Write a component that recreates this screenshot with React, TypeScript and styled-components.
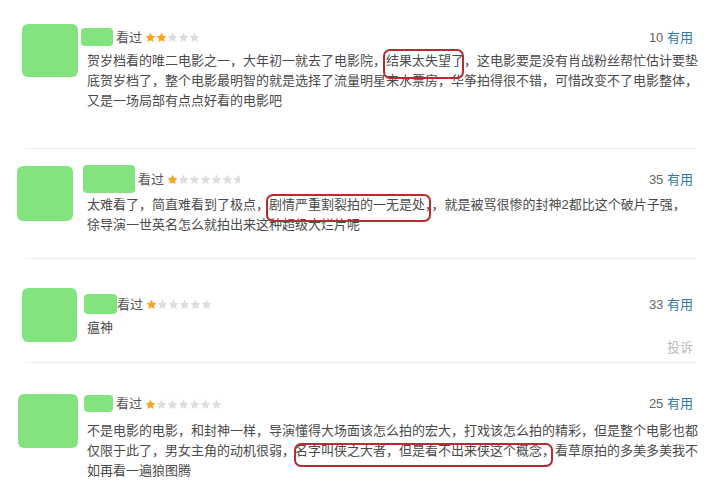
import React from "react";
import styled, { createGlobalStyle } from "styled-components";

const GlobalStyle = createGlobalStyle`
    html, body {
        margin: 0;
        padding: 0;
        background: #fff;
    }
    body {
        font-family: "Liberation Sans", Arial, "Noto Sans CJK SC", sans-serif;
        font-size: 13px;
        color: #4a4a4a;
    }
`;

const Page = styled.div`
    width: 719px;
    height: 485px;
    overflow: hidden;
`;

const Card = styled.div<{ $left: number; $bottom: number }>`
    display: flex;
    align-items: flex-start;
    padding: 0 26px ${({ $bottom }) => $bottom}px ${({ $left }) => $left}px;
`;

const Avatar = styled.div<{ $w: number; $h: number; $top: number; $gap: number }>`
    flex: none;
    width: ${({ $w }) => $w}px;
    height: ${({ $h }) => $h}px;
    margin: ${({ $top }) => $top}px ${({ $gap }) => $gap}px 0 0;
    background: #82e37f;
    border-radius: 6px;
`;

const Body = styled.div<{ $top: number }>`
    flex: 1;
    min-width: 0;
    margin-top: ${({ $top }) => $top}px;
`;

const Header = styled.div<{ $h: number }>`
    display: flex;
    align-items: center;
    height: ${({ $h }) => $h}px;
    white-space: nowrap;
`;

const NameBox = styled.div<{ $w: number; $h: number; $gap: number }>`
    flex: none;
    width: ${({ $w }) => $w}px;
    height: ${({ $h }) => $h}px;
    margin-right: ${({ $gap }) => $gap}px;
    background: #82e37f;
    border-radius: 4px;
`;

const Watched = styled.span`
    color: #555;
    line-height: 1;
    margin-right: 3px;
`;

const StarRow = styled.span<{ $clip: number }>`
    display: inline-flex;
    width: ${({ $clip }) => $clip}px;
    overflow: hidden;
    margin-top: 1px;
`;

const StarIcon = styled.svg`
    flex: none;
    width: 11px;
    height: 11px;
`;

const Votes = styled.span`
    margin-left: auto;
    color: #666;
    line-height: 1;
`;

const Useful = styled.span`
    color: #3377aa;
`;

const Text = styled.div<{ $top: number; $indent: number }>`
    margin-top: ${({ $top }) => $top}px;
    padding-left: ${({ $indent }) => $indent}px;
    line-height: 20px;
    white-space: nowrap;
`;

const Mark = styled.span<{ $t: number; $b: number; $l: number; $r: number }>`
    position: relative;
    &::after {
        content: '';
        position: absolute;
        top: ${({ $t }) => $t}px;
        bottom: ${({ $b }) => $b}px;
        left: ${({ $l }) => $l}px;
        right: ${({ $r }) => $r}px;
        border: 2px solid #bb2a2e;
        border-radius: 7px;
        pointer-events: none;
    }
`;

const Report = styled.div`
    text-align: right;
    line-height: 20px;
    color: #bbb;
`;

const Divider = styled.div`
    height: 1px;
    margin-left: 25px;
    width: 671px;
    background: #eee;
`;

const Star = ({ on }: { on: boolean }) => (
    <StarIcon viewBox="0 0 11 11">
        <path
            d="M5.5 0.6l1.5 3.15 3.45.45-2.5 2.35.65 3.4-3.1-1.65-3.1 1.65.65-3.4L.55 4.2 4 3.75z"
            fill={on ? "#f7a51c" : "#dedede"}
        />
    </StarIcon>
);

interface IComment {
    left: number;
    bottom: number;
    avatar: { w: number; h: number; top: number; gap: number };
    bodyTop: number;
    name: { w: number; h: number; gap: number };
    stars: { on: number; total: number; clip: number };
    votes: number;
    textTop: number;
    indent: number;
    lines: React.ReactNode[];
    report?: boolean;
}

const comments: IComment[] = [
    {
        left: 22, bottom: 37,
        avatar: { w: 56, h: 53, top: 24, gap: 3 },
        bodyTop: 28,
        name: { w: 32, h: 18, gap: 3 },
        stars: { on: 2, total: 5, clip: 55 },
        votes: 10,
        textTop: 5,
        indent: 6,
        lines: [
            <>贺岁档看的唯二电影之一，大年初一就去了电影院，<Mark $t={-4} $b={-11} $l={-3} $r={0}>结果太失望了</Mark>，这电影要是没有肖战粉丝帮忙估计要垫</>,
            "底贺岁档了，整个电影最明智的就是选择了流量明星来水票房，华筝拍得很不错，可惜改变不了电影整体，",
            "又是一场局部有点点好看的电影吧",
        ],
    },
    {
        left: 17, bottom: 23,
        avatar: { w: 56, h: 55, top: 17, gap: 10 },
        bodyTop: 16,
        name: { w: 52, h: 28, gap: 3 },
        stars: { on: 1, total: 7, clip: 73 },
        votes: 35,
        textTop: 2,
        indent: 4,
        lines: [
            <>太难看了，简直难看到了极点，<Mark $t={-3} $b={-10} $l={-3} $r={1}>剧情严重割裂拍的一无是处，</Mark>，就是被骂很惨的封神2都比这个破片子强，</>,
            "徐导演一世英名怎么就拍出来这种超级大烂片呢",
        ],
    },
    {
        left: 22, bottom: 4,
        avatar: { w: 55, h: 54, top: 29, gap: 7 },
        bodyTop: 35,
        name: { w: 33, h: 20, gap: 0 },
        stars: { on: 1, total: 7, clip: 67 },
        votes: 33,
        textTop: 4,
        indent: 3,
        lines: ["瘟神"],
        report: true,
    },
    {
        left: 18, bottom: 10,
        avatar: { w: 60, h: 54, top: 31, gap: 6 },
        bodyTop: 32,
        name: { w: 29, h: 17, gap: 3 },
        stars: { on: 1, total: 7, clip: 76 },
        votes: 25,
        textTop: 9,
        indent: 3,
        lines: [
            "不是电影的电影，和封神一样，导演懂得大场面该怎么拍的宏大，打戏该怎么拍的精彩，但是整个电影也都",
            <>仅限于此了，男女主角的动机很弱，<Mark $t={0} $b={-9} $l={-1} $r={2}>名字叫侠之大者，但是看不出来侠这个概念，</Mark>看草原拍的多美多美我不</>,
            "如再看一遍狼图腾",
        ],
    },
];

const Comment: React.FC<{ c: IComment }> = ({ c }) => (
    <Card $left={c.left} $bottom={c.bottom}>
        <Avatar $w={c.avatar.w} $h={c.avatar.h} $top={c.avatar.top} $gap={c.avatar.gap} />
        <Body $top={c.bodyTop}>
            <Header $h={c.name.h}>
                <NameBox $w={c.name.w} $h={c.name.h} $gap={c.name.gap} />
                <Watched>看过</Watched>
                <StarRow $clip={c.stars.clip}>
                    {Array.from({ length: c.stars.total }, (_, i) => (
                        <Star key={i} on={i < c.stars.on} />
                    ))}
                </StarRow>
                <Votes>{c.votes} <Useful>有用</Useful></Votes>
            </Header>
            <Text $top={c.textTop} $indent={c.indent}>
                {c.lines.map((line, i) => (
                    <div key={i}>{line}</div>
                ))}
            </Text>
            {c.report && <Report>投诉</Report>}
        </Body>
    </Card>
);

const App = () => (
    <Page>
        <GlobalStyle />
        {comments.map((c, i) => (
            <React.Fragment key={i}>
                <Comment c={c} />
                {i < comments.length - 1 && <Divider />}
            </React.Fragment>
        ))}
    </Page>
);

export default App;
